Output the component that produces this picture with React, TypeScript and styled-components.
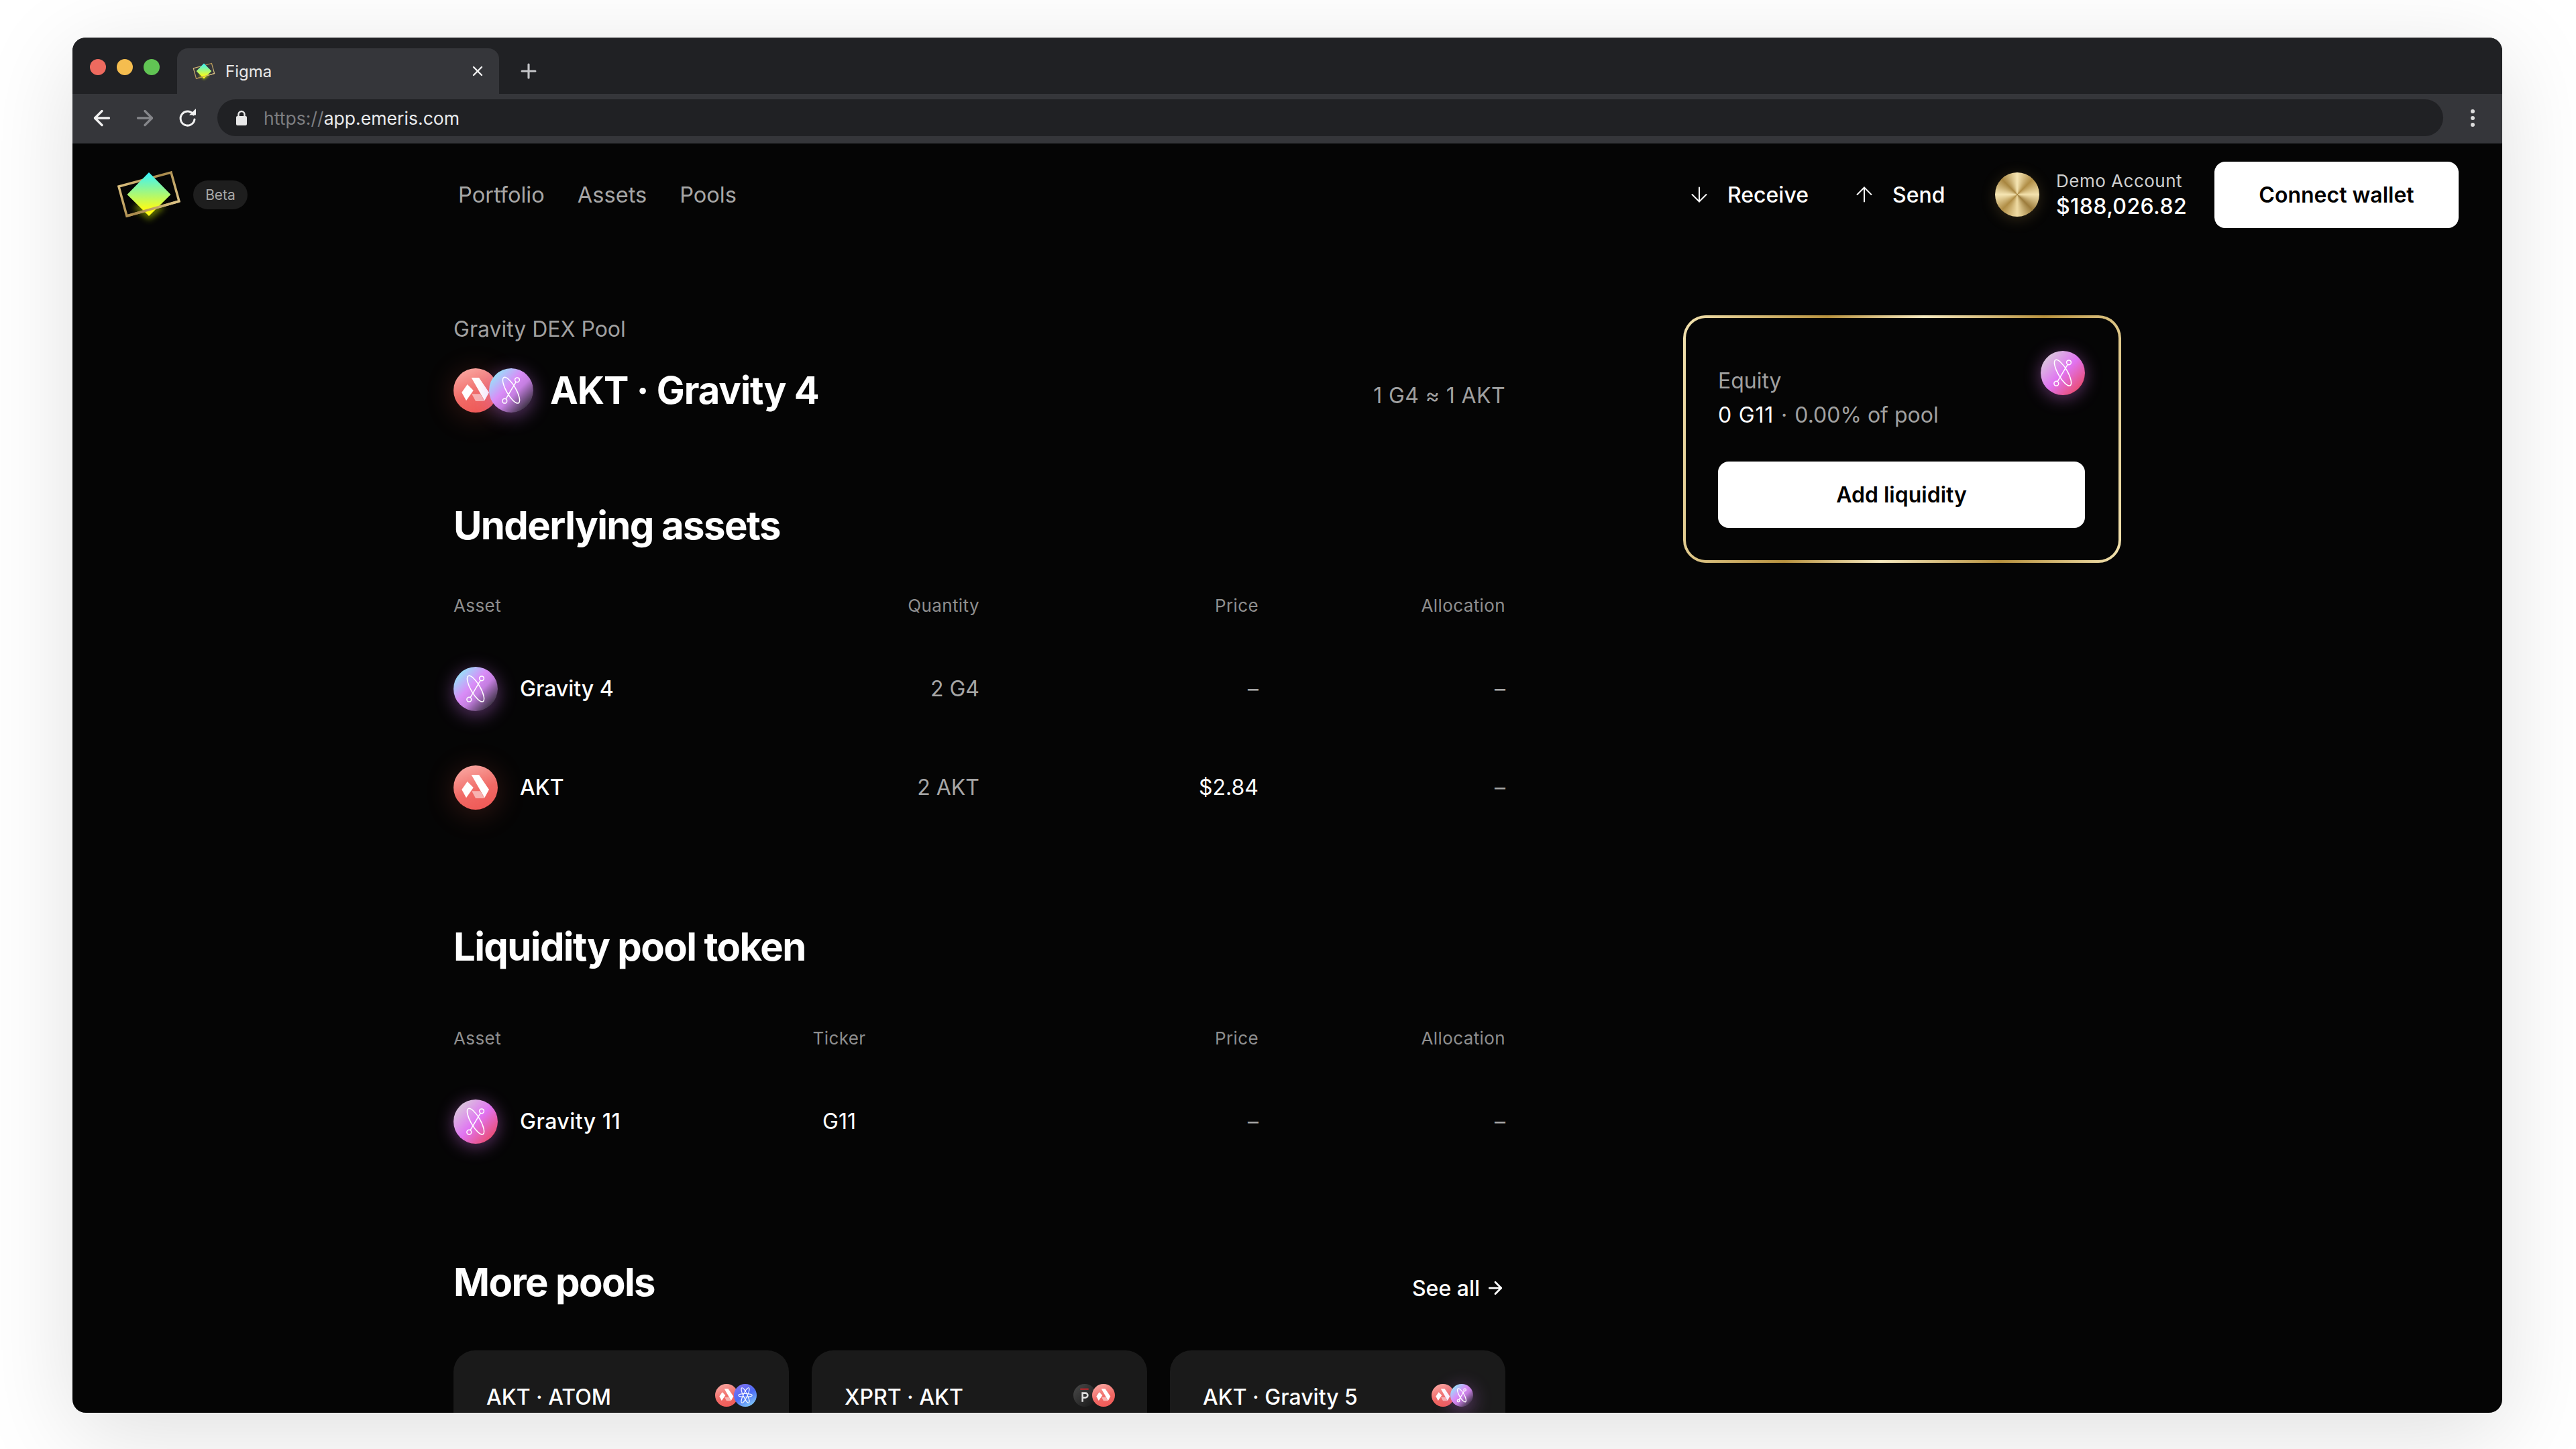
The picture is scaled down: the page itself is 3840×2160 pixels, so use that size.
import styled, { createGlobalStyle } from 'styled-components';
import { ArrowDown, ArrowLeft, ArrowRight, ArrowUp, Plus, X } from 'lucide-react';

const GlobalStyle = createGlobalStyle`
    html, body {
        margin: 0;
        width: 3840px;
        height: 2160px;
        overflow: hidden;
        background: #fff;
        font-family: Inter, "Liberation Sans", sans-serif;
    }
    * { box-sizing: border-box; }
`

const Stage = styled.div`
    width: 3840px;
    height: 2160px;
    padding: 56px 110px 0 108px;
`
const Browser = styled.div`
    width: 3622px;
    height: 2050px;
    border-radius: 20px;
    overflow: hidden;
    background: #050505;
    box-shadow: 0 30px 140px rgba(0, 0, 0, 0.13);
    display: flex;
    flex-direction: column;
`
const TabStrip = styled.div`
    height: 84px;
    flex: none;
    background: #202124;
    display: flex;
    align-items: flex-end;
    padding-left: 156px;
`
const Dots = styled.div`
    width: 0;
    display: flex;
    gap: 16px;
    align-self: flex-start;
    margin-left: -130px;
    margin-right: 130px;
    padding-top: 32px;
`
const Dot = styled.span<{ $color: string }>`
    flex: none;
    width: 24px;
    height: 24px;
    border-radius: 50%;
    background: ${p => p.$color};
`
const Tab = styled.div`
    width: 480px;
    height: 68px;
    background: #35363a;
    border-radius: 16px 16px 0 0;
    display: flex;
    align-items: center;
    padding: 0 20px 0 24px;
    gap: 16px;
    color: #e8e8e8;
    font-size: 24px;
`
const TabTitle = styled.span`
    flex: 1;
`
const NewTab = styled.div`
    height: 68px;
    margin-left: 27px;
    display: flex;
    align-items: center;
    color: #c4c5c8;
`
const Toolbar = styled.div`
    height: 74px;
    flex: none;
    background: #35363a;
    border-bottom: 1px solid #2b2c2f;
    display: flex;
    align-items: center;
    padding: 0 30px 2px 26px;
`
const NavIcons = styled.div`
    display: flex;
    align-items: center;
    gap: 28px;
    width: 190px;
    flex: none;
`
const UrlBar = styled.div`
    width: 3318px;
    height: 55px;
    flex: none;
    border-radius: 28px;
    background: #202124;
    display: flex;
    align-items: center;
    padding-left: 27px;
    font-size: 26.6px;
    color: #e8eaed;
`
const UrlScheme = styled.span`
    color: #7c7d80;
    margin-left: 24px;
`
const Kebab = styled.div`
    margin-left: 41px;
    display: flex;
    flex-direction: column;
    gap: 4px;
`
const KebabDot = styled.span`
    width: 6px;
    height: 6px;
    border-radius: 50%;
    background: #dcdcdc;
`

const Header = styled.header`
    height: 152px;
    flex: none;
    display: flex;
    align-items: center;
    padding: 0 65px 0 68px;
`
const Brand = styled.div`
    display: flex;
    align-items: center;
    gap: 20px;
    width: 507px;
    flex: none;
`
const Beta = styled.span`
    height: 43px;
    width: 81px;
    border-radius: 22px;
    background: #1e1e1e;
    color: #a8a8a8;
    font-size: 21px;
    display: flex;
    align-items: center;
    justify-content: center;
`
const Nav = styled.nav`
    display: flex;
    gap: 49px;
    flex: 1;
`
const NavLink = styled.span`
    font-size: 32.6px;
    color: #a6a6a6;
`
const Action = styled.div<{ $width: number }>`
    width: ${p => p.$width}px;
    display: flex;
    align-items: center;
    gap: 24px;
    color: #fff;
    font-size: 32px;
    font-weight: 500;
`
const Coin = styled.div`
    width: 66px;
    height: 66px;
    border-radius: 50%;
    margin-right: 25px;
    background: conic-gradient(#f6e6b4, #b08d45, #f4e2ae, #9c7c3c, #f0dca4, #b08d45, #f6e6b4, #a88640, #f6e6b4);
    box-shadow: 0 4px 22px rgba(200, 160, 80, 0.22);
`
const Account = styled.div`
    width: 236px;
    display: flex;
    flex-direction: column;
    gap: 3px;
`
const AccountName = styled.span`
    font-size: 26px;
    line-height: 32px;
    letter-spacing: 0.5px;
    color: #cfcfcf;
`
const AccountValue = styled.span`
    font-size: 32px;
    line-height: 38px;
    letter-spacing: 0.4px;
    font-weight: 500;
    color: #fff;
`
const WhiteButton = styled.button<{ $width: string }>`
    width: ${p => p.$width};
    height: 99px;
    border: none;
    border-radius: 16px;
    background: #fff;
    color: #000;
    font-family: inherit;
    font-size: 32px;
    font-weight: 600;
`

const Main = styled.main`
    display: flex;
    align-items: flex-start;
    padding-left: 568px;
`
const Content = styled.div`
    width: 1568px;
    flex: none;
    padding-top: 105px;
`
const Eyebrow = styled.div`
    font-size: 32px;
    line-height: 40px;
    color: #a0a0a0;
`
const TitleRow = styled.div`
    margin-top: 38px;
    display: flex;
    align-items: center;
    height: 66px;
`
const PoolTitle = styled.h1`
    margin: 0 0 0 25px;
    font-size: 56px;
    font-weight: 700;
    letter-spacing: -1px;
    color: #fff;
    flex: 1;
`
const Rate = styled.span`
    font-size: 32px;
    letter-spacing: 0.4px;
    color: #a0a0a0;
    padding-top: 14px;
`
const SectionTitle = styled.h2<{ $top: number }>`
    margin: ${p => p.$top}px 0 0;
    font-size: 58px;
    line-height: 64px;
    font-weight: 700;
    letter-spacing: -1.6px;
    color: #fff;
`
const Row = styled.div<{ $columns: string }>`
    display: grid;
    grid-template-columns: ${p => p.$columns};
    align-items: center;
    height: 147px;
    font-size: 32px;
    color: #a6a6a6;
`
const HeadRow = styled(Row)<{ $top: number }>`
    height: 32px;
    margin: ${p => p.$top}px 0 35px;
    font-size: 26px;
    letter-spacing: 0.4px;
    color: #8e8e8e;
`
const Cell = styled.span<{ $align?: string; $bright?: boolean }>`
    text-align: ${p => p.$align || 'right'};
    color: ${p => (p.$bright ? '#fff' : 'inherit')};
`
const AssetCell = styled.div<{ $spacing?: number }>`
    display: flex;
    align-items: center;
    gap: 33px;
    color: #fff;
    font-weight: 500;
    letter-spacing: ${p => p.$spacing || 0}px;
`
const MoreHead = styled.div`
    display: flex;
    align-items: center;
    justify-content: space-between;
    margin-top: 134px;
`
const SeeAll = styled.span`
    display: flex;
    align-items: center;
    gap: 8px;
    font-size: 32px;
    font-weight: 500;
    color: #fff;
    padding-top: 18px;
`
const PoolCards = styled.div`
    display: grid;
    grid-template-columns: repeat(3, 1fr);
    gap: 34px;
    margin-top: 70px;
`
const PoolCard = styled.div`
    height: 200px;
    border-radius: 32px;
    background: #1a1a1a;
    padding: 50px 48px 0 49px;
    display: flex;
    justify-content: space-between;
    align-items: flex-start;
    color: #fff;
    font-size: 32px;
    font-weight: 500;
    line-height: 40px;
`
const EquityCard = styled.aside`
    width: 653px;
    height: 369px;
    flex: none;
    margin: 104px 0 0 265px;
    border: 4px solid transparent;
    border-radius: 34px;
    background:
        linear-gradient(#050505, #050505) padding-box,
        linear-gradient(100deg, #f3e3b0 0%, #b8923f 30%, #f6e9c0 50%, #b8923f 75%, #f3e3b0 100%) border-box;
    padding: 49px 50px 0 48px;
`
const EquityTop = styled.div`
    display: flex;
    justify-content: space-between;
    height: 165px;
`
const EquityText = styled.div`
    padding-top: 19px;
    font-size: 32px;
    line-height: 51px;
    color: #a0a0a0;
`
const Bright = styled.span`
    color: #fff;
    letter-spacing: 0.8px;
`
const Sep = styled.span`
    margin: 0 2px;
`

const gradients: Record<string, string> = {
    akt: 'linear-gradient(160deg, #fbb0aa 0%, #f06a66 55%, #ee5552 100%)',
    gravity: 'linear-gradient(135deg, #8cf0fb 8%, #d98cf7 42%, #c47ee0 58%, #232327 92%)',
    g11: 'linear-gradient(135deg, #d8d8d8 5%, #e074f2 50%, #ee3f48 100%)',
    atom: 'linear-gradient(150deg, #8a72f0 0%, #4c6cf5 50%, #8fe0f8 100%)',
    xprt: 'linear-gradient(135deg, #4a4a4a 0%, #161616 100%)',
}
const glows: Record<string, string> = {
    akt: '0 6px 44px rgba(240, 100, 80, 0.22)',
    gravity: '0 6px 28px rgba(200, 110, 230, 0.45)',
    g11: '0 4px 26px rgba(210, 110, 230, 0.45)',
    atom: 'none',
    xprt: 'none',
}

const Circle = styled.div<{ $kind: string; $size: number }>`
    width: ${p => p.$size}px;
    height: ${p => p.$size}px;
    flex: none;
    border-radius: 50%;
    background: ${p => gradients[p.$kind]};
    box-shadow: ${p => (p.$size > 40 || p.$kind === 'gravity' ? glows[p.$kind] : 'none')};
    position: relative;
`
const Pair = styled.div<{ $step: number }>`
    display: flex;
    flex: none;
    & > * + * {
        margin-left: -${p => p.$step}px;
    }
`
const Glyph = styled.svg`
    display: block;
    width: 100%;
    height: 100%;
`
const LogoMark = styled.svg<{ $size: number }>`
    display: block;
    flex: none;
    width: ${p => p.$size}px;
    height: ${p => p.$size}px;
    overflow: visible;
`

const TokenIcon = ({ kind, size = 66 }: { kind: string; size?: number }) => (
    <Circle $kind={kind} $size={size}>
        <Glyph viewBox="0 0 66 66">
            {kind === 'akt' && (
                <>
                    <polygon points="26.7,14 38,14 53,36 46.3,48.3" fill="#fff" />
                    <polygon points="20.7,24 12.3,36 19,48.3 29.7,33" fill="#fff" />
                    <polygon points="27.3,38.3 40,38.3 46.3,49 33,49" fill="#fff" opacity="0.5" />
                </>
            )}
            {(kind === 'gravity' || kind === 'g11') && (
                <g fill="none" stroke="#fff" strokeWidth={size > 40 ? 1.5 : 2.5}>
                    <ellipse cx="33" cy="32.7" rx="7" ry="22" transform="rotate(-30 33 32.7)" />
                    <circle cx="42" cy="17.3" r="3.4" />
                    <circle cx="23.3" cy="48.7" r="3.4" />
                    <line x1="40.2" y1="20.3" x2="25" y2="45.8" />
                </g>
            )}
            {kind === 'atom' && (
                <g fill="none" stroke="#fff" strokeWidth="2">
                    <ellipse cx="33" cy="33" rx="6" ry="24" transform="rotate(-25 33 33)" />
                    <ellipse cx="33" cy="33" rx="6" ry="24" transform="rotate(25 33 33)" />
                    <ellipse cx="33" cy="33" rx="20" ry="5" />
                </g>
            )}
            {kind === 'xprt' && (
                <>
                    <rect x="20" y="13" width="24" height="4" fill="#c3262b" />
                    <path d="M24 52V24h11a9 9 0 0 1 0 18h-6v10z M29 29v8h6a4 4 0 0 0 0-8z" fill="#ddd" fillRule="evenodd" />
                </>
            )}
        </Glyph>
    </Circle>
)

const Logo = ({ size, id }: { size: number; id: string }) => (
    <LogoMark $size={size} viewBox="0 0 92 92">
        <defs>
            <linearGradient id={`${id}-fill`} x1="0" y1="0" x2="0" y2="1">
                <stop offset="0" stopColor="#35f4ff" />
                <stop offset="0.85" stopColor="#fdfb14" />
            </linearGradient>
            <linearGradient id={`${id}-gold`} gradientUnits="userSpaceOnUse" x1="1" y1="13" x2="91" y2="78">
                <stop offset="0" stopColor="#e8cd8c" />
                <stop offset="0.5" stopColor="#a98a4c" />
                <stop offset="1" stopColor="#eed79a" />
            </linearGradient>
            <filter id={`${id}-glow`} x="-30%" y="-30%" width="160%" height="170%">
                <feGaussianBlur stdDeviation="5" />
            </filter>
        </defs>
        <polygon points="46,50 70,66 46,84 22,66" fill="#c8e800" opacity="0.45" filter={`url(#${id}-glow)`} />
        <polygon points="1,34 79,13 91,56 13,78" fill="none" stroke={`url(#${id}-gold)`} strokeWidth="3.5" />
        <polygon points="46,13 78.5,46 46,78 13.5,46" fill={`url(#${id}-fill)`} />
        <line x1="13" y1="78" x2="91" y2="56" stroke={`url(#${id}-gold)`} strokeWidth="3.5" />
    </LogoMark>
)

const Reload = () => (
    <svg width="36" height="36" viewBox="0 0 36 36" fill="none">
        <path d="M26.5 13A10.5 10.5 0 1 0 28 20" stroke="#f1f1f1" strokeWidth="3" strokeLinecap="round" />
        <polygon points="20,13.5 30,13.5 30,4" fill="#f1f1f1" />
    </svg>
)

const Lock = () => (
    <svg width="18" height="24" viewBox="0 0 18 24">
        <rect x="1" y="9" width="16" height="14" rx="2" fill="#e8e8e8" />
        <path d="M4.5 10V6.5a4.5 4.5 0 0 1 9 0V10" fill="none" stroke="#e8e8e8" strokeWidth="2.4" />
    </svg>
)

const underlying = [
    { kind: 'gravity', name: 'Gravity 4', qty: '2 G4', price: '–', alloc: '–' },
    { kind: 'akt', name: 'AKT', qty: '2 AKT', price: '$2.84', alloc: '–' },
]
const morePools = [
    { name: 'AKT · ATOM', left: 'akt', right: 'atom' },
    { name: 'XPRT · AKT', left: 'xprt', right: 'akt' },
    { name: 'AKT · Gravity 5', left: 'akt', right: 'gravity' },
]
const assetColumns = '392px 392px 416px 368px'
const tokenColumns = '470px 210px 520px 368px'

const App = () => {
    return (
        <>
            <GlobalStyle />
            <Stage>
                <Browser>
                    <TabStrip>
                        <Dots>
                            <Dot $color="#ee6a5f" />
                            <Dot $color="#f5bd4f" />
                            <Dot $color="#61c454" />
                        </Dots>
                        <Tab>
                            <Logo size={32} id="favicon" />
                            <TabTitle>Figma</TabTitle>
                            <X size={24} strokeWidth={2.4} color="#f0f0f0" />
                        </Tab>
                        <NewTab>
                            <Plus size={34} strokeWidth={2.2} />
                        </NewTab>
                    </TabStrip>
                    <Toolbar>
                        <NavIcons>
                            <ArrowLeft size={36} strokeWidth={2.2} color="#f1f1f1" />
                            <ArrowRight size={36} strokeWidth={2.2} color="#85868a" />
                            <Reload />
                        </NavIcons>
                        <UrlBar>
                            <Lock />
                            <UrlScheme>https://</UrlScheme>
                            app.emeris.com
                        </UrlBar>
                        <Kebab>
                            <KebabDot />
                            <KebabDot />
                            <KebabDot />
                        </Kebab>
                    </Toolbar>
                    <Header>
                        <Brand>
                            <Logo size={92} id="brand" />
                            <Beta>Beta</Beta>
                        </Brand>
                        <Nav>
                            <NavLink>Portfolio</NavLink>
                            <NavLink>Assets</NavLink>
                            <NavLink>Pools</NavLink>
                        </Nav>
                        <Action $width={246}>
                            <ArrowDown size={36} strokeWidth={1.3} />
                            Receive
                        </Action>
                        <Action $width={213}>
                            <ArrowUp size={36} strokeWidth={1.3} />
                            Send
                        </Action>
                        <Coin />
                        <Account>
                            <AccountName>Demo Account</AccountName>
                            <AccountValue>$188,026.82</AccountValue>
                        </Account>
                        <WhiteButton $width="364px">Connect wallet</WhiteButton>
                    </Header>
                    <Main>
                        <Content>
                            <Eyebrow>Gravity DEX Pool</Eyebrow>
                            <TitleRow>
                                <Pair $step={13}>
                                    <TokenIcon kind="akt" />
                                    <TokenIcon kind="gravity" />
                                </Pair>
                                <PoolTitle>AKT · Gravity 4</PoolTitle>
                                <Rate>1 G4 ≈ 1 AKT</Rate>
                            </TitleRow>

                            <SectionTitle $top={136}>Underlying assets</SectionTitle>
                            <HeadRow $columns={assetColumns} $top={71}>
                                <Cell $align="left">Asset</Cell>
                                <Cell>Quantity</Cell>
                                <Cell>Price</Cell>
                                <Cell>Allocation</Cell>
                            </HeadRow>
                            {underlying.map(item => (
                                <Row $columns={assetColumns} key={item.name}>
                                    <AssetCell>
                                        <TokenIcon kind={item.kind} />
                                        {item.name}
                                    </AssetCell>
                                    <Cell>{item.qty}</Cell>
                                    <Cell $bright={item.price !== '–'}>{item.price}</Cell>
                                    <Cell>{item.alloc}</Cell>
                                </Row>
                            ))}

                            <SectionTitle $top={132}>Liquidity pool token</SectionTitle>
                            <HeadRow $columns={tokenColumns} $top={88}>
                                <Cell $align="left">Asset</Cell>
                                <Cell $align="center">Ticker</Cell>
                                <Cell>Price</Cell>
                                <Cell>Allocation</Cell>
                            </HeadRow>
                            <Row $columns={tokenColumns}>
                                <AssetCell $spacing={0.5}>
                                    <TokenIcon kind="g11" />
                                    Gravity 11
                                </AssetCell>
                                <Cell $align="center" $bright>G11</Cell>
                                <Cell>–</Cell>
                                <Cell>–</Cell>
                            </Row>

                            <MoreHead>
                                <SectionTitle $top={0}>More pools</SectionTitle>
                                <SeeAll>
                                    See all
                                    <ArrowRight size={30} strokeWidth={2.2} />
                                </SeeAll>
                            </MoreHead>
                            <PoolCards>
                                {morePools.map(pool => (
                                    <PoolCard key={pool.name}>
                                        {pool.name}
                                        <Pair $step={6}>
                                            <TokenIcon kind={pool.left} size={34} />
                                            <TokenIcon kind={pool.right} size={34} />
                                        </Pair>
                                    </PoolCard>
                                ))}
                            </PoolCards>
                        </Content>
                        <EquityCard>
                            <EquityTop>
                                <EquityText>
                                    Equity
                                    <br />
                                    <Bright>0 G11</Bright> <Sep>·</Sep> 0.00% of pool
                                </EquityText>
                                <TokenIcon kind="g11" />
                            </EquityTop>
                            <WhiteButton $width="547px">Add liquidity</WhiteButton>
                        </EquityCard>
                    </Main>
                </Browser>
            </Stage>
        </>
    );
};

export default App;
